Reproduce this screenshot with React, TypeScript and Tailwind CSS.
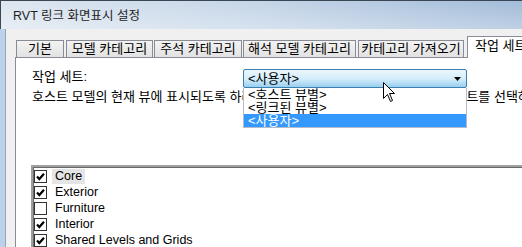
const font = { fontFamily: '"Liberation Sans", "Noto Sans CJK KR", sans-serif' };

const tabs = [
  { label: '기본', w: 'w-[48px]', ml: 'ml-0' },
  { label: '모델 카테고리', w: 'w-[87px]', ml: 'ml-[2px]' },
  { label: '주석 카테고리', w: 'w-[88px]', ml: 'ml-[1px]' },
  { label: '해석 모델 카테고리', w: 'w-[113px]', ml: 'ml-[1px]' },
  { label: '카테고리 가져오기', w: 'w-[106px]', ml: 'ml-[2px]' },
];

const worksets = [
  { name: 'Core', checked: true, focused: true },
  { name: 'Exterior', checked: true },
  { name: 'Furniture', checked: false },
  { name: 'Interior', checked: true },
  { name: 'Shared Levels and Grids', checked: true },
];

const options = ['<호스트 뷰별>', '<링크된 뷰별>', '<사용자>'];

function CheckBox({ checked }: { checked: boolean }) {
  return (
    <div className="w-[13px] h-[13px] border border-[#333] bg-white flex items-center justify-center flex-shrink-0">
      {checked && (
        <svg width="9" height="9" viewBox="0 0 9 9">
          <path d="M1 4.5 L3.3 7 L8 1.8" fill="none" stroke="#000" strokeWidth="2.2" />
        </svg>
      )}
    </div>
  );
}

function Cursor() {
  return (
    <svg className="absolute left-[140px] top-[13px]" width="13" height="21" viewBox="0 0 13 21">
      <path
        d="M0.5 0.5 L0.5 16.5 L4.5 12.5 L7.5 19.5 L9.5 18.5 L6.5 11.5 L11.5 11.5 Z"
        fill="#fff"
        stroke="#000"
        strokeWidth="1"
      />
    </svg>
  );
}

export default function App() {
  return (
    <div className="w-[522px] h-[247px] overflow-hidden flex flex-col bg-[#f0f0f0] text-[13px] text-black" style={font}>
      {/* title bar */}
      <div className="h-[29px] flex-shrink-0 border-t border-l border-[#3b4654] bg-gradient-to-r from-[#dde6f0] via-[#c4d5e8] to-[#a3bcd9]">
        <div className="h-full bg-gradient-to-b from-transparent to-white/30 flex items-center pl-[12px] pt-[2px]">
          <span className="text-[12.5px] leading-[14px] text-[#1e1e1e]">RVT 링크 화면표시 설정</span>
        </div>
      </div>

      <div className="flex flex-1 min-h-0">
        {/* left frame */}
        <div className="w-[6px] flex-shrink-0 bg-[#bcd2ea] border-r border-[#94a6bb]" />

        {/* client area */}
        <div className="flex-1 flex flex-col pl-[9px] pt-[7px] min-w-0">
          {/* tabs */}
          <div className="h-[21px] flex items-end pl-[1px] flex-shrink-0">
            {tabs.map((t) => (
              <div
                key={t.label}
                className={`${t.w} ${t.ml} h-[17px] flex-shrink-0 border border-b-0 border-[#898c95] bg-gradient-to-b from-[#f3f3f3] to-[#e2e2e2] flex items-center justify-center leading-[14px] whitespace-nowrap`}
              >
                {t.label}
              </div>
            ))}
            <div className="ml-[3px] w-[80px] h-[22px] -mb-px relative z-10 flex-shrink-0 border border-b-0 border-[#898c95] bg-white pl-[7px] pt-[2px] leading-[14px] whitespace-nowrap">
              작업 세트
            </div>
          </div>

          {/* tab page */}
          <div className="flex-1 bg-white border-t border-l border-[#898c95] flex flex-col">
            <div className="flex items-start mt-[11px]">
              <div className="w-[227px] pl-[16px] pt-[1px] leading-[14px] flex-shrink-0">작업 세트:</div>
              <div className="relative w-[224px] flex-shrink-0 z-20">
                <div className="h-[19px] rounded-[2px] border border-[#3c7fb1] bg-gradient-to-b from-[#eaf6fd] via-[#d6eefb] to-[#98d0f1] flex items-center pl-[4px] pr-[5px]">
                  <span className="flex-1 leading-[14px]">&lt;사용자&gt;</span>
                  <svg width="7" height="4" viewBox="0 0 7 4">
                    <path d="M0 0 H7 L3.5 4 Z" fill="#000" />
                  </svg>
                </div>
                <div className="absolute left-0 top-full w-[224px] bg-white border border-t-0 border-[#b4bccc] flex flex-col">
                  {options.map((o, i) => (
                    <div
                      key={o}
                      className={`h-[13px] pl-[4px] leading-[13px] ${i === 2 ? 'bg-[#3399ff] text-white' : ''}`}
                    >
                      {o}
                    </div>
                  ))}
                </div>
                <Cursor />
              </div>
            </div>

            <div className="mt-[2px] pl-[16px] leading-[14px] whitespace-nowrap">
              호스트 모델의 현재 뷰에 표시되도록 하려는 링크된 모델파일의 열린 모든 작업 세트를 선택하십시오.
            </div>

            {/* workset list */}
            <div className="mt-[61px] ml-[15px] flex-1 border-t-2 border-l-2 border-t-[#a0a0a0] border-l-[#a0a0a0] shadow-[inset_1px_1px_0_#696969] pt-[1px] text-[12.5px]">
              {worksets.map((w) => (
                <div key={w.name} className="h-[16px] flex items-center pl-[1px]">
                  <CheckBox checked={w.checked} />
                  <span
                    className={`ml-[5px] px-[3px] h-[15px] leading-[15px] whitespace-nowrap ${w.focused ? 'bg-[#e5e5e5]' : ''}`}
                  >
                    {w.name}
                  </span>
                </div>
              ))}
            </div>
          </div>
        </div>
      </div>
    </div>
  );
}
